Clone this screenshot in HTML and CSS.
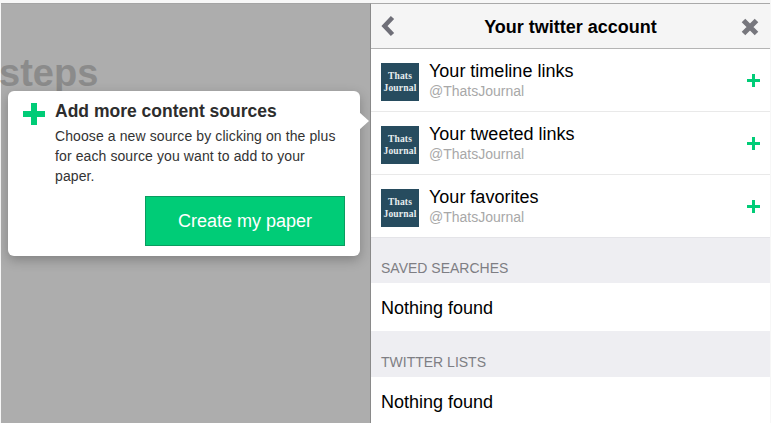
FILE: index.html
```html
<!DOCTYPE html>
<html lang="en">
<head>
<meta charset="utf-8">
<title>Your twitter account</title>
<link rel="stylesheet" href="styles.css">
</head>
<body>
<div class="frame">
  <main class="backdrop">
    <h1 class="steps">steps</h1>
    <section class="tip">
      <svg class="tip-plus" viewBox="0 0 22 22" aria-hidden="true"><path d="M8 0h6v8h8v6h-8v8H8v-8H0V8h8z"/></svg>
      <div class="tip-body">
        <h2 class="tip-title">Add more content sources</h2>
        <p class="tip-text">Choose a new source by clicking on the plus for each source you want to add to your paper.</p>
        <div class="tip-actions"><button class="create">Create my paper</button></div>
      </div>
    </section>
  </main>
  <aside class="panel">
    <header class="head">
      <svg class="back" viewBox="0 0 14 22" aria-hidden="true"><path d="M11.500 2.500 3.500 11l8 8.500"/></svg>
      <div class="head-title">Your twitter account</div>
      <svg class="close" viewBox="0 0 18 18" aria-hidden="true"><path d="M2.500 2.500l13 13M15.500 2.500l-13 13"/></svg>
    </header>
    <div class="row">
      <div class="avatar"><span>Thats</span><span>Journal</span></div>
      <div class="row-text"><div class="row-name">Your timeline links</div><div class="row-handle">@ThatsJournal</div></div>
      <svg class="add" viewBox="0 0 13 13" aria-hidden="true"><path d="M5 0h3v5h5v3H8v5H5V8H0V5h5z"/></svg>
    </div>
    <div class="row">
      <div class="avatar"><span>Thats</span><span>Journal</span></div>
      <div class="row-text"><div class="row-name">Your tweeted links</div><div class="row-handle">@ThatsJournal</div></div>
      <svg class="add" viewBox="0 0 13 13" aria-hidden="true"><path d="M5 0h3v5h5v3H8v5H5V8H0V5h5z"/></svg>
    </div>
    <div class="row row-last">
      <div class="avatar"><span>Thats</span><span>Journal</span></div>
      <div class="row-text"><div class="row-name">Your favorites</div><div class="row-handle">@ThatsJournal</div></div>
      <svg class="add" viewBox="0 0 13 13" aria-hidden="true"><path d="M5 0h3v5h5v3H8v5H5V8H0V5h5z"/></svg>
    </div>
    <div class="section-label">SAVED SEARCHES</div>
    <div class="empty">Nothing found</div>
    <div class="section-label section-label-tall">TWITTER LISTS</div>
    <div class="empty">Nothing found</div>
  </aside>
</div>
</body>
</html>
```
FILE: styles.css
```css
* { box-sizing: border-box; }
html, body { margin: 0; height: 100%; overflow: hidden; background: #fff; }
body { font-family: "Liberation Sans", Arial, sans-serif; color: #000; }

.frame {
  display: flex;
  height: 423px;
  width: 771px;
  padding: 3px 0 0 1px;
  background: #f7f7f7;
  position: relative;
}

.backdrop {
  position: relative;
  width: 369px;
  background: #adadad;
  border-top: 1px solid #a4a4a4;
  flex: none;
  height: 420px;
  padding-top: 46px;
  overflow: visible;
}
.steps {
  margin: 0 0 0 -2px;
  font-size: 38px;
  line-height: 46px;
  font-weight: 700;
  color: #8b8b8b;
}

.tip {
  position: absolute;
  left: 7px;
  top: 87px;
  width: 352px;
  height: 165px;
  background: #fff;
  border-radius: 6px;
  box-shadow: 0 4px 12px rgba(0, 0, 0, 0.25);
  display: flex;
  padding: 10px 15px 0 15px;
  z-index: 2;
}
.tip::after {
  content: "";
  position: absolute;
  right: -9px;
  top: 21px;
  width: 0;
  height: 0;
  border-style: solid;
  border-width: 9px 0 9px 10px;
  border-color: transparent transparent transparent #fff;
}
.tip-plus { width: 22px; height: 22px; fill: #00cc77; flex: none; margin-top: 2px; }
.tip-body { margin-left: 10px; flex: 1; }
.tip-title { margin: 0; font-size: 17.5px; line-height: 21px; font-weight: 700; color: #2d2d2d; }
.tip-text { margin: 4px 0 0; max-width: 285px; font-size: 14px; line-height: 20px; letter-spacing: 0.1px; color: #333; }
.tip-actions { display: flex; justify-content: flex-end; margin-top: 10px; }
.create {
  width: 200px;
  height: 50px;
  background: #00cc77;
  border: 1px solid #0a9c60;
  color: #fff;
  font: 18px "Liberation Sans", Arial, sans-serif;
  padding: 0;
}

.panel {
  width: 400px;
  flex: none;
  height: 420px;
  background: #fff;
  border-left: 1px solid #8a8a8a;
  border-top: 1px solid #a9a9a9;
}
.head {
  height: 45px;
  background: #f5f5f5;
  border-bottom: 1px solid #b4b4b4;
  display: flex;
  align-items: center;
  padding: 0 10px;
}
.back { width: 14px; height: 22px; fill: none; stroke: #6f6f78; stroke-width: 4.500; flex: none; margin: 0 0 1px 0; }
.head-title { flex: 1; text-align: center; font-size: 18px; font-weight: 700; margin: 3px 0 0 5px; }
.close { width: 18px; height: 18px; fill: none; stroke: #77777d; stroke-width: 5; flex: none; margin: 1px 1px 0 0; }

.row {
  height: 63px;
  display: flex;
  align-items: flex-start;
  padding: 14px 10px 0;
  border-bottom: 1px solid #e9e9e9;
}
.row-last { border-bottom: 1px solid #e4e4e8; }
.avatar {
  width: 38px;
  height: 38px;
  background: #274c5f;
  color: #e8eef0;
  font: 700 9.5px/12px "Liberation Serif", serif;
  letter-spacing: 0.2px;
  display: flex;
  flex-direction: column;
  align-items: center;
  justify-content: center;
  flex: none;
}
.row-text { margin-left: 10px; flex: 1; margin-top: -2px; }
.row-name { font-size: 18px; line-height: 21px; }
.row-handle { font-size: 14px; line-height: 17px; margin-top: 1px; color: #a8a8a8; }
.add { width: 13px; height: 13px; fill: #00cc77; flex: none; margin-top: 11px; }

.section-label {
  height: 45px;
  background: #eeeef2;
  color: #7e7e84;
  font-size: 14px;
  line-height: 17px;
  padding: 22px 10px 0;
}
.section-label-tall { height: 46px; padding-top: 23px; }
.empty {
  height: 48px;
  font-size: 18px;
  line-height: 21px;
  padding: 15px 10px 0;
  background: #fff;
}
.empty:last-child { height: 46px; }
```
